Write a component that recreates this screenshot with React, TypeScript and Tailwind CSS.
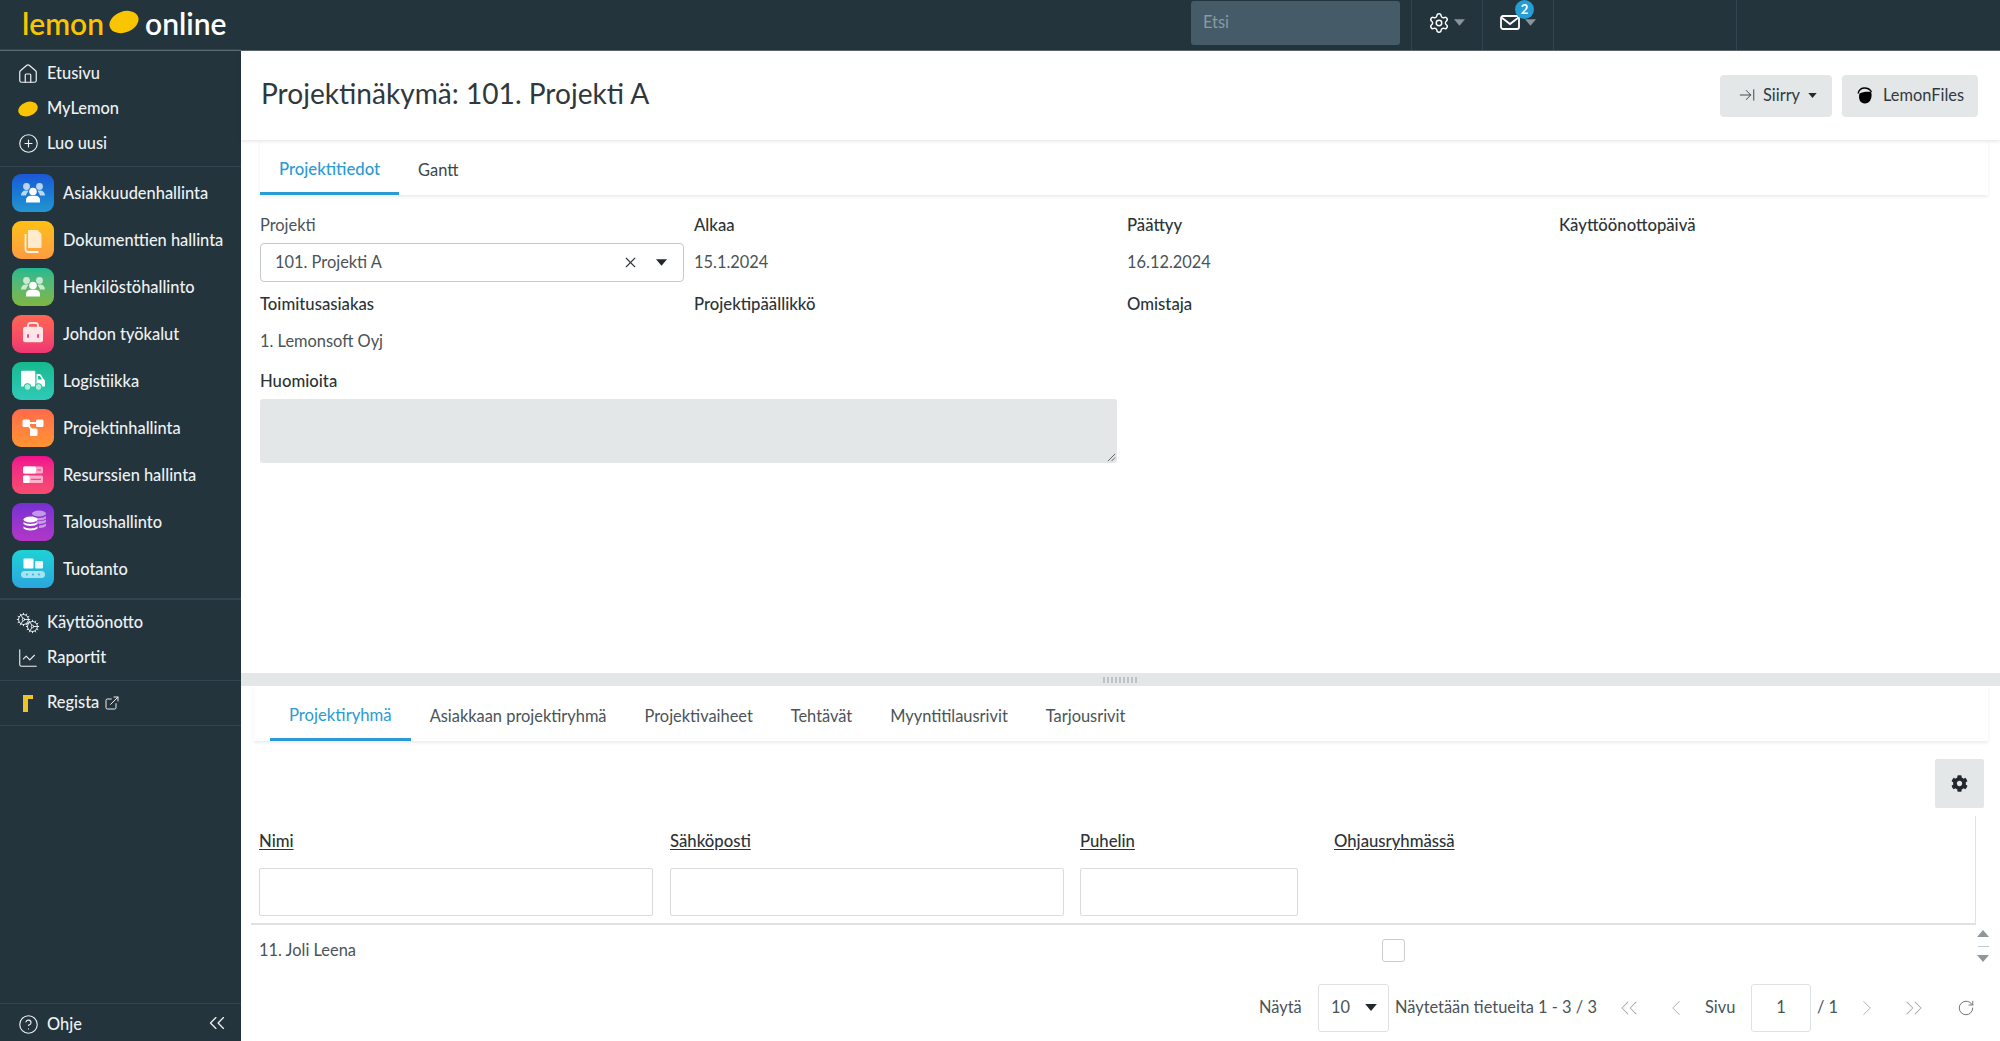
import React from 'react';
import {
  House, CirclePlus, ChartLine, ExternalLink, CircleHelp, ChevronsLeft, Settings, X, ArrowRightToLine,
  RotateCw, ChevronLeft, ChevronRight, ChevronsRight, Cog,
} from 'lucide-react';
import { FaCog } from 'react-icons/fa';

const Caret: React.FC<{ className?: string }> = ({ className }) => (
  <svg viewBox="0 0 10 6" className={className} fill="currentColor"><path d="M0 0h10L5 6z" /></svg>
);

const Blob: React.FC<{ className?: string }> = ({ className }) => (
  <svg viewBox="0 0 30 24" className={className} fill="#f9c400">
    <ellipse cx="15" cy="12" rx="15" ry="10.500" transform="rotate(-20 15 12)" />
  </svg>
);

const apps = [
  { label: 'Asiakkuudenhallinta', bg: 'bg-gradient-to-b from-[#1c57d6] to-[#2496d0]', icon: 'people' },
  { label: 'Dokumenttien hallinta', bg: 'bg-gradient-to-b from-[#fdc00c] to-[#fe9b40]', icon: 'docs' },
  { label: 'Henkilöstöhallinto', bg: 'bg-gradient-to-b from-[#1fb98f] to-[#7fb63f]', icon: 'people' },
  { label: 'Johdon työkalut', bg: 'bg-gradient-to-b from-[#ff6650] to-[#ef3572]', icon: 'toolbox' },
  { label: 'Logistiikka', bg: 'bg-gradient-to-b from-[#16b98e] to-[#2fcab8]', icon: 'truck' },
  { label: 'Projektinhallinta', bg: 'bg-gradient-to-b from-[#ff6a4b] to-[#ff9530]', icon: 'nodes' },
  { label: 'Resurssien hallinta', bg: 'bg-gradient-to-b from-[#ef0f8c] to-[#f84c6e]', icon: 'bars' },
  { label: 'Taloushallinto', bg: 'bg-gradient-to-b from-[#762fd2] to-[#b336c6]', icon: 'coins' },
  { label: 'Tuotanto', bg: 'bg-gradient-to-b from-[#1ed2d4] to-[#2ba6dd]', icon: 'belt' },
];

const AppGlyph: React.FC<{ name: string }> = ({ name }) => {
  const c = (
    {
      people: (
        <>
          <g opacity=".7">
            <circle cx="14.500" cy="12.500" r="3.400" />
            <circle cx="27.500" cy="12.500" r="3.400" />
            <path d="M9 21.500c0-3 2-5 4.500-5h2.500c1 .8-1.500 2.500-2 5zM33 21.500c0-3-2-5-4.500-5H26c-1 .8 1.500 2.500 2 5z" />
          </g>
          <circle cx="21" cy="17.500" r="3.800" />
          <path d="M14 28.500v-2.500c0-2.500 2-4.200 4.500-4.200h5c2.500 0 4.500 1.700 4.500 4.200v2.500z" />
        </>
      ),
      docs: (
        <>
          <path d="M16 9h9.500l4 4v14H16z" opacity=".75" />
          <path d="M13.500 13v15c0 1.700 1.200 3 3 3h10" fill="none" stroke="#fff" strokeWidth="1.800" opacity=".85" />
        </>
      ),
      toolbox: (
        <>
          <path d="M16 12v-1.500c0-1.500 1-2.500 2.500-2.500h5c1.500 0 2.500 1 2.500 2.500V12" fill="none" stroke="#fff" strokeOpacity=".8" strokeWidth="1.800" />
          <path d="M11 14c0-1.300 1-2.300 2.300-2.300h15.400c1.300 0 2.300 1 2.300 2.300v11c0 1.300-1 2.300-2.300 2.300H13.300C12 27.300 11 26.300 11 25z" opacity=".85" />
          <rect x="15" y="19" width="2" height="4" fill="#f3497a" rx="1" />
          <rect x="25" y="19" width="2" height="4" fill="#f3497a" rx="1" />
        </>
      ),
      truck: (
        <>
          <path d="M9 10c0-.8.6-1.300 1.300-1.300H22c.8 0 1.300.5 1.300 1.300v14.500H9z" />
          <path d="M24.500 12h2.500c1 0 1.800.5 2.300 1.300l2.200 3.700 1.500 1.500v6h-8.500z" />
          <path d="M26 14h2l2 3.500h-4z" fill="#22bf9d" />
          <circle cx="15.500" cy="25" r="3.400" fill="#a9ecdc" stroke="#20c09f" strokeWidth="1" />
          <circle cx="26.500" cy="25" r="3.400" fill="#a9ecdc" stroke="#20c09f" strokeWidth="1" />
        </>
      ),
      nodes: (
        <>
          <path d="M13 14h15M14 14l8 9" stroke="#fff" strokeWidth="1.800" />
          <rect x="10.500" y="10.500" width="7.500" height="7.500" rx="1.500" />
          <rect x="24" y="10.500" width="7.500" height="7.500" rx="1.500" />
          <rect x="18" y="19.500" width="7.500" height="7.500" rx="1.500" />
        </>
      ),
      bars: (
        <>
          <rect x="11" y="10.500" width="20" height="7" rx="1.500" opacity=".6" />
          <rect x="11" y="10.500" width="13" height="7" rx="1.500" />
          <rect x="11" y="19.500" width="20" height="7.500" rx="1.500" opacity=".6" />
          <rect x="11" y="19.500" width="6.500" height="7.500" rx="1.500" />
          <rect x="25.500" y="13.500" width="3.500" height="1" fill="#f4307c" />
          <rect x="19" y="22.800" width="10" height="1" fill="#f4307c" />
        </>
      ),
      coins: (
        <>
          <g opacity=".5">
            <ellipse cx="27" cy="10.500" rx="7" ry="3" />
            <path d="M20 13c1.500 1.300 4 2 7 2s5.500-.7 7-2v2.500c-1.500 1.300-4 2-7 2-3 0-5.500-.7-7-2zM24 18c4 .5 8 0 10-1.500v2.500c-1.500 1.300-3 2-7 2z" />
            <path d="M27 22.500c3 0 5.500-1 7-2V23c-1.500 1.300-3 2-7 2z" />
          </g>
          <ellipse cx="18.500" cy="16.500" rx="7" ry="3" />
          <path d="M11.500 19c1.500 1.300 4 2 7 2s5.500-.7 7-2v2c-1.500 1.300-4 2-7 2s-5.500-.7-7-2zM11.500 23.500c1.500 1.300 4 2 7 2s5.500-.7 7-2v2c-1.500 1.300-4 2-7 2s-5.500-.7-7-2z" />
        </>
      ),
      belt: (
        <>
          <rect x="11.500" y="8.500" width="10" height="10" rx="1" />
          <rect x="23" y="11" width="8" height="7.500" rx="1" opacity=".9" />
          <rect x="9" y="21" width="24" height="7" rx="3.500" opacity=".6" />
          <circle cx="15" cy="24.500" r="1" fill="#2bb6da" />
          <circle cx="21" cy="24.500" r="1" fill="#2bb6da" />
          <circle cx="27" cy="24.500" r="1" fill="#2bb6da" />
        </>
      ),
    } as Record<string, React.ReactNode>
  )[name];
  return <svg viewBox="0 0 42 38" className="w-[42px] h-[38px]" fill="#fff">{c}</svg>;
};

const NavRow: React.FC<{ icon: React.ReactNode; label: string; h: string; children?: React.ReactNode }> = ({ icon, label, h, children }) => (
  <div className={`flex items-center ${h}`}>
    <div className="w-[47px] flex justify-center pl-[9px] shrink-0">{icon}</div>
    <span className="-mt-[1px]">{label}</span>
    {children}
  </div>
);

const Sidebar: React.FC = () => (
  <aside className="w-[241px] shrink-0 bg-[#24343d] text-[#eef1f2] font-medium flex flex-col">
    <div className="pt-[5px] pb-[5px] border-b border-[#32444e]">
      <NavRow h="h-[35px]" label="Etusivu" icon={<House size={22} strokeWidth={1.3} />} />
      <NavRow h="h-[35px]" label="MyLemon" icon={<Blob className="w-[20px] h-[16px]" />} />
      <NavRow h="h-[35px]" label="Luo uusi" icon={<CirclePlus size={21} strokeWidth={1.3} />} />
    </div>
    <div className="pt-[7px] pb-[10px] border-b-2 border-[#32444e] flex flex-col gap-[9px]">
      {apps.map(a => (
        <div key={a.label} className="flex items-center h-[38px] pl-3">
          <div className={`w-[42px] h-[38px] rounded-[9px] ${a.bg}`}>
            <AppGlyph name={a.icon} />
          </div>
          <span className="ml-[9px] whitespace-nowrap">{a.label}</span>
        </div>
      ))}
    </div>
    <div className="pt-[5px] pb-[4px] border-b border-[#32444e]">
      <NavRow
        h="h-[35px]"
        label="Käyttöönotto"
        icon={
          <div className="relative w-[22px] h-[20px]">
            <Cog size={15} strokeWidth={1.5} className="absolute -left-px -top-px" />
            <Cog size={15} strokeWidth={1.5} className="absolute -right-px -bottom-px" />
          </div>
        }
      />
      <NavRow h="h-[36px]" label="Raportit" icon={<ChartLine size={22} strokeWidth={1.2} />} />
    </div>
    <div className="py-[4px] border-b border-[#32444e]">
      <NavRow
        h="h-[36px]"
        label="Regista"
        icon={
          <svg viewBox="0 0 10 17" className="w-[10px] h-[17px]" fill="#eec22a">
            <path d="M0 0h10v4H5v13H0z" />
          </svg>
        }
      >
        <ExternalLink size={16} strokeWidth={1.5} className="ml-[5px]" />
      </NavRow>
    </div>
    <div className="mt-auto h-[38px] border-t border-[#32444e] flex items-center pr-[11px]">
      <div className="pt-[4px]">
        <NavRow h="h-[36px]" label="Ohje" icon={<CircleHelp size={21} strokeWidth={1.3} />} />
      </div>
      <ChevronsLeft size={26} strokeWidth={1.2} className="ml-auto" />
    </div>
  </aside>
);

const TopBar: React.FC = () => (
  <header className="h-[51px] shrink-0 bg-[#24343d] border-b border-[#5d6a71] flex items-center">
    <div className="w-[241px] h-[50px] shrink-0 border-b border-[#32444e] flex items-center pl-[22px] pb-[4px] text-[30px] font-semibold leading-none">
      <span className="text-[#f9c400]">lemon</span>
      <Blob className="w-[30px] h-[24px] ml-[5px] mr-[6px] -mt-[2px]" />
      <span className="text-white">online</span>
    </div>
    <div className="ml-[950px] w-[209px] h-[44px] -mt-[5px] bg-[#465b68] rounded-[3px] flex items-center pl-3 text-[#8a9aa4]">Etsi</div>
    <div className="ml-[11px] w-[71px] h-[50px] border-l border-[#32444e] flex items-center pl-[16px] pb-[5px] text-white">
      <Settings size={22} strokeWidth={1.6} />
      <Caret className="w-[11px] h-[7px] ml-[4px] text-[#8a959b]" />
    </div>
    <div className="relative w-[71px] h-[50px] border-l border-[#32444e] flex items-center pl-[17px] pb-[5px] text-white">
      <svg viewBox="0 0 20 15" className="w-[20px] h-[15px]" fill="none" stroke="currentColor" strokeWidth="1.800">
        <rect x="1" y="1" width="18" height="13" rx="2" />
        <path d="M1.500 2.500 10 9l8.500-6.500" />
      </svg>
      <Caret className="w-[11px] h-[7px] ml-[5px] text-[#8a959b]" />
      <span className="absolute left-[32px] top-0 w-[19px] h-[19px] rounded-full bg-[#249ed6] text-white text-[13px] font-bold flex items-center justify-center">2</span>
    </div>
    <div className="w-[184px] h-[50px] border-x border-[#32444e]" />
  </header>
);

const GrayBtn: React.FC<{ className: string; children: React.ReactNode }> = ({ className, children }) => (
  <div className={`h-[42px] bg-[#e4e7e8] rounded-[4px] flex items-center pb-[1px] text-[#30393e] ${className}`}>{children}</div>
);

const ProjectForm: React.FC = () => {
  const labelCls = 'h-[22px] leading-[22px] font-medium text-[#2c3438] text-[16.7px]';
  const cols = 'grid grid-cols-[434px_433px_432px_1fr]';
  return (
    <div className="flex-1 pt-[19px] pl-[19px] text-[#4a5358]">
      <div className={cols}>
        <div className="h-[22px] leading-[22px]">Projekti</div>
        <div className={labelCls}>Alkaa</div>
        <div className={labelCls}>Päättyy</div>
        <div className={labelCls}>Käyttöönottopäivä</div>
      </div>
      <div className={`${cols} mt-[7px] h-[39px] items-center`}>
        <div className="w-[424px] h-[39px] border border-[#c3c8cb] rounded-[4px] flex items-center pl-[14px] pr-[16px]">
          <span>101. Projekti A</span>
          <X size={17} strokeWidth={1.6} className="ml-auto text-[#30393e]" />
          <Caret className="w-[11px] h-[7px] ml-[17px] text-[#22292d]" />
        </div>
        <div className="pb-[1px]">15.1.2024</div>
        <div className="pb-[1px]">16.12.2024</div>
      </div>
      <div className={`${cols} mt-[11px]`}>
        <div className={labelCls}>Toimitusasiakas</div>
        <div className={labelCls}>Projektipäällikkö</div>
        <div className={labelCls}>Omistaja</div>
      </div>
      <div className="mt-[15px] h-[22px] leading-[22px]">1. Lemonsoft Oyj</div>
      <div className={`mt-[18px] ${labelCls}`}>Huomioita</div>
      <div className="relative mt-[7px] w-[857px] h-[64px] bg-[#e4e7e8] rounded-[3px]">
        <svg viewBox="0 0 10 10" className="absolute right-[1px] bottom-[1px] w-[9px] h-[9px]" stroke="#555" strokeWidth="1">
          <path d="M1 9 9 1M5 9l4-4" />
        </svg>
      </div>
    </div>
  );
};

const BottomTabs = ['Asiakkaan projektiryhmä', 'Projektivaiheet', 'Tehtävät', 'Myyntitilausrivit', 'Tarjousrivit'];

const Main: React.FC = () => (
  <main className="flex-1 min-w-0 flex flex-col bg-white">
    <div className="h-[89px] shrink-0 flex items-center pl-5 pr-[22px] shadow-[0_1px_4px_rgba(0,0,0,0.12)] relative">
      <h1 className="text-[28.1px] text-[#2f383d] leading-none -mt-[5px]">Projektinäkymä: 101. Projekti A</h1>
      <GrayBtn className="ml-auto w-[112px] pl-[18px]">
        <ArrowRightToLine size={18} strokeWidth={1.2} />
        <span className="ml-[7px]">Siirry</span>
        <Caret className="w-[9px] h-[5px] ml-[8px] text-[#22292d]" />
      </GrayBtn>
      <GrayBtn className="ml-[10px] w-[136px] pl-[15px]">
        <svg viewBox="0 0 16 17" className="w-[16px] h-[17px]">
          <path d="M1 6.500C2 3 4.500 1 7.500 1c3.500 0 6 2 7 4" fill="none" stroke="#000" strokeWidth="1.300" />
          <path d="M2.500 6.500c3-1.500 7-2 11.500-1.500 1 2 .8 5.500-.8 8.500-1.500 2.500-5 3.500-7.700 2.500C2 14.500 1.500 10 2.500 6.500z" fill="#000" />
        </svg>
        <span className="ml-[10px]">LemonFiles</span>
      </GrayBtn>
    </div>
    <div className="h-[55px] shrink-0 ml-[19px] mr-[12px] flex shadow-[0_2px_3px_rgba(0,0,0,0.08)] relative">
      <div className="px-[19px] flex items-center text-[#2b9bd3] text-[16.7px] font-medium border-b-[3px] border-[#2b9bd3] pt-[8px]">Projektitiedot</div>
      <div className="px-[19px] flex items-center text-[#3d464b] pt-[6px]">Gantt</div>
    </div>
    <ProjectForm />
    <div className="h-[13px] shrink-0 bg-[#e4e7e8] flex items-center justify-center">
      <div className="w-[36px] h-[6px] bg-[repeating-linear-gradient(90deg,#bcc2c5_0_2px,transparent_2px_4px)]" />
    </div>
    <div className="h-[355px] shrink-0 flex flex-col">
      <div className="h-[55px] shrink-0 ml-[13px] mr-[12px] pl-4 flex shadow-[0_2px_3px_rgba(0,0,0,0.08)]">
        <div className="px-[19px] flex items-center text-[#2b9bd3] text-[16.7px] border-b-[3px] border-[#2b9bd3] pt-[8px]">Projektiryhmä</div>
        {BottomTabs.map(t => (
          <div key={t} className="px-[19px] flex items-center text-[#4a5358] pt-[5px]">{t}</div>
        ))}
      </div>
      <div className="mt-[18px] flex justify-end pr-[16px]">
        <div className="w-[49px] h-[49px] bg-[#e4e7e8] rounded-[2px] flex items-center justify-center text-[#22292d]">
          <FaCog size={17} />
        </div>
      </div>
      <div className="ml-[10px] mt-[8px] w-[1725px] border-r border-[#dfe2e4] pt-[14px] pl-[8px] pb-[7px] border-b-2 border-b-[#dfe2e4] text-[#2c3438] text-[16.7px] font-medium">
        <div className="flex h-[22px] leading-[22px] underline underline-offset-2">
          <div className="w-[411px]">Nimi</div>
          <div className="w-[410px]">Sähköposti</div>
          <div className="w-[254px]">Puhelin</div>
          <div>Ohjausryhmässä</div>
        </div>
        <div className="flex mt-[16px]">
          <div className="w-[411px]"><div className="w-[394px] h-[48px] border border-[#d9dcde] rounded-[2px]" /></div>
          <div className="w-[410px]"><div className="w-[394px] h-[48px] border border-[#d9dcde] rounded-[2px]" /></div>
          <div className="w-[218px] h-[48px] border border-[#d9dcde] rounded-[2px]" />
        </div>
      </div>
      <div className="ml-[10px] flex h-[52px] text-[#4a5358]">
        <div className="w-[1725px] flex items-center pl-[8px] pb-[2px]">
          <div className="w-[1123px]">11. Joli Leena</div>
          <div className="w-[23px] h-[23px] border border-[#c9cdd0] rounded-[3px]" />
        </div>
        <div className="w-[14px] h-[34px] mt-[4px] flex flex-col items-center justify-between text-[#8f979b]">
          <Caret className="w-[12px] h-[9px] rotate-180" />
          <div className="w-[11px] h-px bg-[#c5c9cb]" />
          <Caret className="w-[12px] h-[9px]" />
        </div>
      </div>
      <div className="mt-[7px] h-[48px] flex items-center pl-[1018px] text-[#4a5358]">
        <div className="w-[59px] pb-[2px]">Näytä</div>
        <div className="w-[71px] h-[48px] border border-[#dfe2e4] rounded-[3px] flex items-center pl-[12px] pb-[2px]">
          <span>10</span>
          <Caret className="w-[12px] h-[7px] ml-[15px] text-[#22292d]" />
        </div>
        <div className="ml-[6px] w-[224px] whitespace-nowrap pb-[2px]">Näytetään tietueita 1 - 3 / 3</div>
        <div className="w-[20px] flex justify-center text-[#a7adb1]"><ChevronsLeft size={28} strokeWidth={0.9} className="shrink-0" /></div>
        <div className="ml-[28px] w-[18px] flex justify-center text-[#a7adb1]"><ChevronLeft size={26} strokeWidth={0.9} className="shrink-0" /></div>
        <div className="ml-[20px] w-[46px] pb-[2px]">Sivu</div>
        <div className="w-[60px] h-[48px] border border-[#dfe2e4] rounded-[3px] flex items-center justify-center pb-[2px]">1</div>
        <div className="ml-[6px] w-[30px] pb-[2px]">/ 1</div>
        <div className="ml-[11px] w-[18px] flex justify-center text-[#a7adb1]"><ChevronRight size={26} strokeWidth={0.9} className="shrink-0" /></div>
        <div className="ml-[28px] w-[20px] flex justify-center text-[#a7adb1]"><ChevronsRight size={28} strokeWidth={0.9} className="shrink-0" /></div>
        <RotateCw size={18} strokeWidth={1.2} className="ml-[33px] text-[#5d666b]" />
      </div>
    </div>
  </main>
);

const App: React.FC = () => (
  <div className="w-[2000px] h-[1041px] overflow-hidden flex flex-col font-['Lato',sans-serif] text-[16.4px]">
    <TopBar />
    <div className="flex-1 min-h-0 flex">
      <Sidebar />
      <Main />
    </div>
  </div>
);

export default App;
